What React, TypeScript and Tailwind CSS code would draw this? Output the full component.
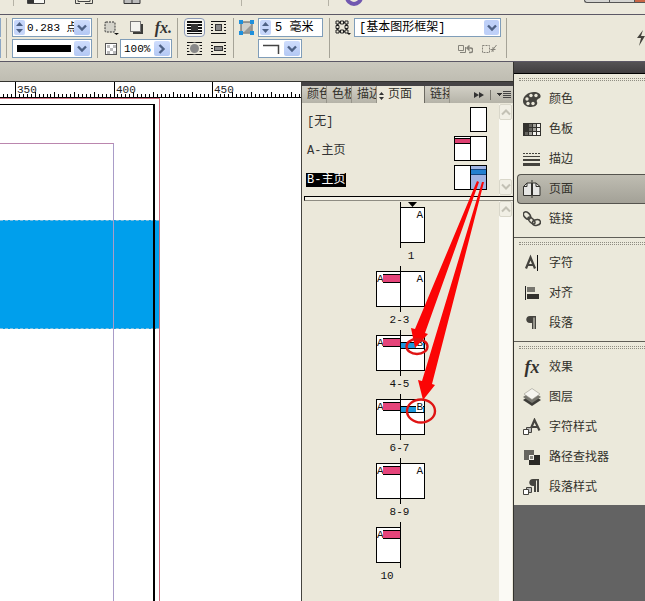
import { useState } from "react";
import type { ReactNode } from "react";

type SpreadData = {
  label: string;
  left?: string;
  right?: string;
};

const spreads: SpreadData[] = [
  { label: "1", right: "A" },
  { label: "2-3", left: "A", right: "A" },
  { label: "4-5", left: "A", right: "B" },
  { label: "6-7", left: "A", right: "B" },
  { label: "8-9", left: "A", right: "A" },
  { label: "10", left: "A" },
];

const Separator = () => <div className="w-px shrink-0 self-stretch bg-[#a5a397]" />;

const Chevron = ({ className = "" }: { className?: string }) => (
  <svg viewBox="0 0 10 8" className={"w-[10px] h-2 " + className}>
    <path d="M1 1.5 L5 5.5 L9 1.5" fill="none" stroke="#4d6185" strokeWidth="2.4" />
  </svg>
);

const DropButton = ({ label, turn = "" }: { label: string; turn?: string }) => (
  <button
    aria-label={label}
    className="w-4 shrink-0 flex items-center justify-center rounded-xs bg-linear-to-b from-[#cfddfc] to-[#b3c8f4]"
  >
    <Chevron className={turn} />
  </button>
);

const Stepper = ({ label }: { label: string }) => (
  <button
    aria-label={label}
    className="w-[11px] shrink-0 flex items-center justify-center rounded-xs bg-[#c6d6fa]"
  >
    <svg viewBox="0 0 9 13" className="w-[9px] h-[13px]">
      <path d="M1 5 L4.5 1 L8 5 Z M1 8 L4.5 12 L8 8 Z" fill="#4d6185" />
    </svg>
  </button>
);

const Field = ({ children, className = "" }: { children: ReactNode; className?: string }) => (
  <div className={"flex h-[19px] p-px bg-white border border-[#7f9db9] " + className}>
    {children}
  </div>
);

const WrapIcon = ({ kind }: { kind: "none" | "box" | "shape" | "jump" }) => (
  <svg viewBox="0 0 15 13" className="w-[15px] h-[13px]" shapeRendering="crispEdges">
    <path
      d="M0 .5H15M0 3.5H15M0 6.5H15M0 9.5H15M0 12.5H15"
      stroke="#111"
      strokeWidth={kind === "none" ? 2 : 1}
    />
    {kind === "none" && <rect x="4" y="3" width="7" height="7" fill="#333" />}
    {kind === "box" && (
      <>
        <rect x="2" y="2" width="11" height="9" fill="#ebe8da" />
        <rect x="4.5" y="3.5" width="6" height="6" fill="#888" stroke="#333" />
      </>
    )}
    {kind === "shape" && (
      <g shapeRendering="auto">
        <circle cx="7.5" cy="6.5" r="6" fill="#ebe8da" />
        <circle cx="7.5" cy="6.5" r="4.5" fill="#888" />
      </g>
    )}
    {kind === "jump" && (
      <>
        <rect x="2" y="2" width="11" height="9" fill="#ebe8da" />
        <rect x="3.5" y="4.5" width="8" height="4" fill="#888" stroke="#333" />
      </>
    )}
  </svg>
);

const TopStrip = () => (
  <div className="flex items-start h-[15px] pl-[13px] bg-[#ece9dc] border-b border-[#5c5866] overflow-hidden">
    <div className="w-px h-1.5 bg-[#b5b2a6]" />
    <svg viewBox="0 0 114 4" className="ml-[13px] w-[114px] h-1">
      <path d="M.5 0V3.5H17.5V0" fill="#f8f8f4" stroke="#444" />
      <rect x="1" width="6" height="3" fill="#333" />
      <path d="M48.5 0V3.5H53M58 3.5H65.5V0M51 0V1.5H63V0" fill="none" stroke="#444" />
      <path d="M97 0V3.5H113V0M105 0V3" fill="#bbb" stroke="#333" />
    </svg>
    <div className="ml-[100px] w-px h-1.5 bg-[#b5b2a6]" />
    <div className="ml-[86px] w-px h-1.5 bg-[#b5b2a6]" />
    <svg viewBox="0 0 18 7" className="ml-4 w-[18px] h-[7px]">
      <circle cx="9" cy="-3" r="7" fill="none" stroke="#7158b0" strokeWidth="4" />
    </svg>
    <div className="ml-auto flex h-[3px] w-[61px] border-l border-b border-[#555] rounded-bl bg-[#d5d5d2]">
      <div className="w-[25px] border-r border-[#555]" />
      <div className="w-[25px] border-r border-[#555]" />
      <div className="flex-1 bg-[#c96545]" />
    </div>
  </div>
);

const ControlBar = () => {
  const [weight, setWeight] = useState("0.283 点");
  const [opacity, setOpacity] = useState("100%");
  const [corner, setCorner] = useState("5 毫米");

  return (
    <div className="flex gap-[5px] py-[3px] bg-[#ebe8da] border-b border-[#5c5866] overflow-hidden">
      <div className="w-px flex flex-col gap-0.5 shrink-0">
        <div className="h-[19px] bg-[#8ba6c4]" />
        <div className="h-[19px] bg-[#8ba6c4]" />
      </div>
      <Separator />

      <div className="flex flex-col gap-0.5 w-[80px] shrink-0">
        <Field>
          <Stepper label="粗细" />
          <input
            aria-label="描边粗细"
            value={weight}
            onChange={(e) => setWeight(e.target.value)}
            className="min-w-0 flex-1 pl-0.5 text-[11px] leading-4 outline-none"
          />
          <DropButton label="选择粗细" />
        </Field>
        <Field>
          <div className="flex-1 mx-[3px] my-1 bg-black" />
          <DropButton label="描边类型" />
        </Field>
      </div>
      <Separator />

      <div className="flex flex-col gap-0.5 w-[69px] shrink-0">
        <div className="flex items-center justify-between h-[19px]">
          <svg viewBox="0 0 16 15" className="w-4 h-[15px]">
            <rect x="2" y="2" width="10" height="10" rx="1" fill="#d4d3ca" stroke="#333" strokeDasharray="2 1" />
            <path d="M11 13h5l-2.5 2z" fill="#111" />
          </svg>
          <svg viewBox="0 0 15 15" className="w-[15px] h-[15px]">
            <rect x="4" y="4" width="10" height="10" fill="#3d3d3a" />
            <rect x="1.5" y="1.5" width="10" height="10" fill="#f3f3ef" stroke="#777" />
          </svg>
          <button
            aria-label="添加效果"
            className="font-['Liberation_Serif',serif] italic font-bold text-base leading-4 text-[#333]"
          >
            fx.
          </button>
        </div>
        <div className="flex items-center justify-between h-[19px] pl-0.5">
          <svg viewBox="0 0 12 12" className="w-3 h-3">
            <rect x=".5" y=".5" width="11" height="11" fill="#fff" stroke="#555" />
            <path d="M2 2h3v3H2zM8 2h3v3H8zM5 5h3v3H5zM2 8h3v3H2zM8 8h3v3H8z" fill="#bbb" />
          </svg>
          <Field className="w-[52px]">
            <input
              aria-label="不透明度"
              value={opacity}
              onChange={(e) => setOpacity(e.target.value)}
              className="min-w-0 flex-1 pl-0.5 text-[11px] leading-4 outline-none"
            />
            <DropButton label="调整不透明度" turn="-rotate-90" />
          </Field>
        </div>
      </div>
      <Separator />

      <div className="grid grid-cols-2 gap-y-0.5 w-[45px] shrink-0 place-items-center">
        <button
          aria-label="无文本绕排"
          className="flex items-center justify-center w-[21px] h-[19px] rounded border border-[#8d9bb8] bg-[#f6f5f0]"
        >
          <WrapIcon kind="none" />
        </button>
        <button aria-label="沿定界框绕排" className="h-[19px] pl-1 flex items-center">
          <WrapIcon kind="box" />
        </button>
        <button aria-label="沿对象形状绕排" className="h-[19px] flex items-center">
          <WrapIcon kind="shape" />
        </button>
        <button aria-label="上下型绕排" className="h-[19px] pl-1 flex items-center">
          <WrapIcon kind="jump" />
        </button>
      </div>
      <Separator />

      <div className="flex gap-1 w-[85px] shrink-0">
        <svg viewBox="0 0 15 15" className="mt-0.5 w-[15px] h-[15px] shrink-0">
          <rect x="2" y="2" width="11" height="11" fill="#cfcfca" stroke="#555" />
          <path d="M5 12 L12 5 V12 Z" fill="#9a9a96" />
          <path d="M0 0h4v4H0zM11 0h4v4h-4zM0 11h4v4H0zM11 11h4v4h-4z" fill="#1e90dc" />
        </svg>
        <div className="flex flex-col gap-0.5">
          <Field className="w-[65px]">
            <Stepper label="转角" />
            <input
              aria-label="转角大小"
              value={corner}
              onChange={(e) => setCorner(e.target.value)}
              className="min-w-0 flex-1 pl-1 text-xs leading-4 outline-none"
            />
          </Field>
          <Field className="w-[44px]">
            <svg viewBox="0 0 24 15" className="flex-1 h-[15px]">
              <path d="M3 4.5H18.5V13" fill="none" stroke="#444" strokeWidth="1.5" />
            </svg>
            <DropButton label="转角形状" />
          </Field>
        </div>
      </div>
      <Separator />

      <div className="flex gap-[3px] w-[166px] shrink-0">
        <svg viewBox="0 0 16 15" className="mt-0.5 w-4 h-[15px] shrink-0">
          <rect x="2.5" y="2.5" width="9" height="9" fill="none" stroke="#222" strokeWidth="1.5" />
          <path
            d="M1 1h3v3H1zM5.500 1h3v3h-3zM10 1h3v3h-3zM1 5.500h3v3H1zM10 5.500h3v3h-3zM1 10h3v3H1zM5.500 10h3v3h-3zM10 10h3v3h-3z"
            fill="#ebe8da"
            stroke="#222"
          />
          <path d="M12 13h4l-2 2z" fill="#111" />
        </svg>
        <div className="flex-1 flex flex-col gap-0.5">
          <div className="relative">
            <select
              aria-label="对象样式"
              className="block w-full h-[19px] pl-1 appearance-none bg-white border border-[#7f9db9] text-xs leading-4 outline-none"
            >
              <option>[基本图形框架]</option>
            </select>
            <span className="pointer-events-none absolute inset-y-0.5 right-0.5 w-[15px] flex items-center justify-center rounded-xs bg-[#bed0f8]">
              <Chevron />
            </span>
          </div>
          <div className="flex justify-end items-center gap-2 h-[19px] pr-1">
            <svg viewBox="0 0 16 10" className="w-4 h-[10px]" fill="none" stroke="#85837a">
              <path d="M1.500 1.500h5v5h-5zM3 8.500h5.500V3" />
              <path d="M10.500 4h3a2 2 0 0 1 0 4.500H12M12.500 1.500 L10 4 L12.500 6.500" strokeWidth="1.5" />
            </svg>
            <svg viewBox="0 0 16 10" className="w-4 h-[10px]" fill="none" stroke="#85837a">
              <rect x="1.500" y="1.500" width="7" height="7" strokeDasharray="2 1" />
              <path d="M9.500 5.500h5M12 3v5M10.500 7.500 L15.500 1" />
            </svg>
          </div>
        </div>
      </div>
      <Separator />
      <button aria-label="快速应用" className="ml-auto flex items-center overflow-hidden w-2.5">
        <svg viewBox="0 0 10 18" className="w-2.5 h-[18px] shrink-0">
          <path d="M8 1 L2 9 H6 L4 17 L10 7 H6 Z" fill="#44423c" />
        </svg>
      </button>
    </div>
  );
};

// 50 mm take up 98.5 px at the current zoom level
const Ruler = () => {
  const ticks = Array.from({ length: 78 }, (_, i) => i - 4);
  return (
    <div className="h-4 overflow-hidden bg-white border-b border-black">
      <svg className="block w-full h-4" shapeRendering="crispEdges">
        {ticks.map((i) => (
          <rect
            key={i}
            x={Math.round(15 + i * 3.94)}
            y={i % 25 === 0 ? 0 : i % 5 === 0 ? 10 : 12}
            width="1"
            height="16"
            fill="#000"
          />
        ))}
        {["350", "400", "450"].map((text, i) => (
          <text key={text} x={17 + Math.round(i * 98.5)} y="11" fontSize="11" fill="#222">
            {text}
          </text>
        ))}
      </svg>
    </div>
  );
};

const Canvas = () => (
  <div className="relative flex-1 overflow-hidden bg-white">
    <div className="absolute left-0 top-[122px] w-[159px] h-[109px] bg-[#009fec] border-y border-dashed border-[#7fbfe0]" />
    <div className="absolute left-0 top-0 bottom-0 w-40 border-t border-r border-[#cf6d7e]" />
    <div className="absolute left-0 top-1.5 bottom-0 w-[155px] border-t border-r-2 border-black" />
    <div className="absolute left-0 top-[45px] bottom-0 w-[114px] border-t border-r border-t-[#bb86ae] border-r-[#a99cc8]" />
  </div>
);

const Tab = ({ children }: { children: string }) => (
  <button className="w-[25px] pt-0.5 pl-[5px] overflow-hidden whitespace-nowrap text-left border-r border-[#96948a]">
    {children}
  </button>
);

const ScrollArrow = ({ down = false }: { down?: boolean }) => (
  <button
    aria-label={down ? "向下滚动" : "向上滚动"}
    className="flex items-center justify-center w-[13px] h-4 rounded-xs border border-[#d9d7ca] bg-[#f1efe5]"
  >
    <svg viewBox="0 0 10 8" className={down ? "w-2.5 h-2" : "w-2.5 h-2 rotate-180"}>
      <path d="M1 1.5 L5 5.5 L9 1.5" fill="none" stroke="#c3c1b5" strokeWidth="2" />
    </svg>
  </button>
);

const MasterRow = ({ name, selected = false, children }: {
  name: string;
  selected?: boolean;
  children: ReactNode;
}) => (
  <div className="flex items-center justify-between h-[29px] pl-1 pr-3">
    <span className={"mt-1 px-px text-xs leading-[14px] " + (selected ? "bg-black text-white" : "text-[#333]")}>
      {name}
    </span>
    <div className="flex h-[25px] -mt-px border border-black bg-white divide-x divide-black">{children}</div>
  </div>
);

const Spread = ({ label, left, right }: SpreadData) => (
  <div className="h-16">
    <div className="flex items-center h-[46px]">
      <div className="w-6">
        {left && (
          <div className="flex h-9 pt-0.5 border border-r-0 border-black bg-white">
            <span className="w-1.5 text-[11px] leading-[11px]">{left}</span>
            <div className="flex-1 h-[9px] border-y border-black bg-[#e5447a]" />
          </div>
        )}
      </div>
      <div className="w-px h-full bg-black" />
      <div className="w-6">
        {right && (
          <div className="h-9 pt-0.5 border border-l-0 border-black bg-white">
            {right === "B" ? (
              <div className="flex justify-end h-[7px] mt-1 border-y border-black bg-[#1b97dc]">
                <span className="-mt-1 mr-px h-[9px] bg-white text-[11px] leading-[9px]">B</span>
              </div>
            ) : (
              <div className="pr-px text-right text-[11px] leading-[11px]">{right}</div>
            )}
          </div>
        )}
      </div>
    </div>
    <div className={"flex h-4 items-center text-[11px] leading-4 " + (left ? "" : "pl-6")}>
      <span className={"text-center " + (left && right ? "w-[47px]" : "w-[22px]")}>{label}</span>
    </div>
  </div>
);

// Red call-outs from master B to the pages it is applied to
const Callouts = () => (
  <svg
    viewBox="302 81 210 350"
    className="pointer-events-none absolute left-0 top-0 w-[210px] h-[350px]"
  >
    <path d="M477 180 L415 328 L411 327 L415 347 L428 333 L425 332 L479 181 Z" fill="#fb0505" />
    <path d="M482 181 L422 380 L418 379 L423 399 L435 384 L432 383 L484 181 Z" fill="#fb0505" />
    <ellipse cx="417" cy="345.5" rx="10.5" ry="7.5" fill="none" stroke="#df1414" strokeWidth="2.4" />
    <ellipse cx="421" cy="410" rx="14" ry="11.5" fill="none" stroke="#df1414" strokeWidth="2.4" />
  </svg>
);

const PagesPanel = () => (
  <div className="relative flex flex-col w-[212px] shrink-0 bg-[#ebe8da] border-l border-[#45443f]">
    <div className="h-1 bg-[#454345]" />
    <div className="flex h-[17px] text-xs leading-[15px] text-[#33322c] bg-linear-to-b from-[#d2d0c6] to-[#b5b3a8]">
      <Tab>颜色</Tab>
      <Tab>色板</Tab>
      <Tab>描边</Tab>
      <button className="flex items-center gap-1 w-[48px] pt-0.5 pl-0.5 whitespace-nowrap bg-[#ebe8da] border-r border-[#6c6a62]">
        <svg viewBox="0 0 5 8" className="w-[5px] h-2">
          <path d="M0 3 L2.500 0 L5 3 Z M0 5 L2.500 8 L5 5 Z" fill="#333" />
        </svg>
        页面
      </button>
      <Tab>链接</Tab>
      <div className="ml-auto flex items-center gap-1.5 pr-0.5">
        <button aria-label="折叠面板">
          <svg viewBox="0 0 10 6" className="w-2.5 h-1.5">
            <path d="M0 0 L5 3 L0 6 Z M5 0 L10 3 L5 6 Z" fill="#333" />
          </svg>
        </button>
        <div className="w-px h-2.5 bg-[#77756d]" />
        <button aria-label="面板菜单">
          <svg viewBox="0 0 14 8" className="w-3.5 h-2" shapeRendering="crispEdges">
            <path d="M0 2h5L2.500 5z" fill="#333" />
            <path d="M6 .5h8M6 2.500h8M6 4.500h8M6 6.500h8" stroke="#444" />
          </svg>
        </button>
      </div>
    </div>

    <div className="flex">
      <div className="flex-1 pt-0.5 pb-1">
        <MasterRow name="[无]">
          <div className="w-[15px]" />
        </MasterRow>
        <MasterRow name="A-主页">
          <div className="w-4 pt-px">
            <div className="h-1.5 border-y border-black bg-[#dd3f70]" />
          </div>
          <div className="w-[15px]" />
        </MasterRow>
        <MasterRow name="B-主页" selected>
          <div className="w-4" />
          <div className="w-[15px] pt-[3px] bg-[#9fb3e3]">
            <div className="h-1.5 border-y border-[#15457f] bg-[#2380d0]" />
          </div>
        </MasterRow>
      </div>
      <div className="flex flex-col justify-between w-[13px] my-px mr-px bg-[#fbfaf5]">
        <ScrollArrow />
        <ScrollArrow down />
      </div>
    </div>

    <div className="h-[5px] ml-0.5 border-t border-l border-black border-b border-b-[#8e8c82] bg-[#f4f2e8]" />

    <div className="flex flex-1">
      <div className="flex flex-1 flex-col items-center pt-px text-[#111]">
        <div className="h-0 w-[49px] pl-8">
          <svg viewBox="0 0 9 5" className="w-[9px] h-[5px]">
            <path d="M0 0 H9 L4.500 5 Z" fill="#000" />
          </svg>
        </div>
        {spreads.map((spread) => (
          <Spread key={spread.label} {...spread} />
        ))}
      </div>
      <div className="w-[13px] mr-px bg-[#fbfaf5]">
        <ScrollArrow />
      </div>
    </div>
    <Callouts />
  </div>
);

const iconClass = "w-[18px] h-[18px] shrink-0";

const icons: Record<string, ReactNode> = {
  颜色: (
    <svg viewBox="0 0 18 18" className={iconClass}>
      <path
        d="M11 2 C5 2 0 6 0 11 C0 15 4 17 8 17 C13 17 15 14 14 12 C13 10 15 9 17 8 C19 5 16 2 11 2 Z"
        fill="#45443f"
      />
      <g fill="#ebe8da">
        <circle cx="4" cy="9" r="1.700" />
        <circle cx="8" cy="5.500" r="1.700" />
        <circle cx="13" cy="5.500" r="1.700" />
        <circle cx="5" cy="13.500" r="1.700" />
        <circle cx="10" cy="13.500" r="1.700" />
      </g>
    </svg>
  ),
  色板: (
    <svg viewBox="0 0 18 18" className={iconClass} shapeRendering="crispEdges">
      <rect y="3" width="18" height="13" fill="#33322e" />
      <path d="M6 4h3v3H6zM6 8h3v3H6zM2 12h3v3H2z" fill="#66655f" />
      <path d="M10 4h3v3h-3zM10 8h3v3h-3zM6 12h3v3H6z" fill="#a3a29b" />
      <path d="M14 4h3v3h-3zM14 8h3v3h-3zM10 12h3v3h-3zM14 12h3v3h-3z" fill="#f4f3ee" />
    </svg>
  ),
  描边: (
    <svg viewBox="0 0 18 18" className={iconClass} shapeRendering="crispEdges">
      <path d="M0 3.500H17" stroke="#44433d" strokeDasharray="2 1" />
      <path d="M0 6h17v1H0zM0 9h17v2H0zM0 13h17v3H0z" fill="#44433d" />
    </svg>
  ),
  页面: (
    <svg viewBox="0 0 18 18" className={iconClass}>
      <path d="M8.500 3 H4 L.5 6.500 V15.500 H8.500 Z M9.500 3 H13 L17 6.500 V15.500 H9.500 Z" fill="#e6e6e4" stroke="#33322e" />
      <path d="M4 3V6.500H.5M13 3V6.500H17" fill="none" stroke="#33322e" />
      <path d="M9 0V18" stroke="#33322e" />
    </svg>
  ),
  链接: (
    <svg viewBox="0 0 18 18" className={iconClass} fill="none" stroke="#45443f" strokeWidth="1.500">
      <ellipse cx="4" cy="5.500" rx="2.800" ry="4.200" transform="rotate(-42 4 5.500)" />
      <ellipse cx="13.500" cy="12.500" rx="4" ry="2.800" transform="rotate(-12 13.500 12.500)" />
      <ellipse cx="8.500" cy="10.500" rx="2" ry="4.400" transform="rotate(-45 8.500 10.500)" />
    </svg>
  ),
  字符: (
    <svg viewBox="0 0 18 18" className={iconClass} fill="none" stroke="#45443f">
      <path d="M3 14.500 L7.500 3.500 L12 14.500 M4.500 11 H10.500" strokeWidth="2.200" />
      <path d="M14.500 1V17" stroke="#111" />
    </svg>
  ),
  对齐: (
    <svg viewBox="0 0 18 18" className={iconClass} shapeRendering="crispEdges">
      <path d="M2 2h1v14H2z" fill="#222" />
      <path d="M4 3h8v5H4z" fill="#77766f" />
      <path d="M4 10h12v5H4z" fill="#33322e" />
    </svg>
  ),
  段落: (
    <svg viewBox="0 0 18 18" className={iconClass}>
      <path d="M13 2 H7 C2 2 2 9 7 9 H9 V15 H10.500 V3.500 H11.500 V15 H13 Z" fill="#45443f" />
    </svg>
  ),
  效果: (
    <span className="w-[18px] font-['Liberation_Serif',serif] italic font-bold text-lg leading-[18px] text-[#33322e]">
      fx
    </span>
  ),
  图层: (
    <svg viewBox="0 0 18 18" className={iconClass}>
      <path d="M9 6 L18 12 L9 18 L0 12 Z" fill="#3d3c38" />
      <path d="M9 3 L18 9 L9 15 L0 9 Z" fill="#77766f" />
      <path d="M9 .5 L17 6 L9 11.500 L1 6 Z" fill="#f6f5f0" stroke="#99978d" strokeWidth=".6" />
    </svg>
  ),
  字符样式: (
    <svg viewBox="0 0 18 18" className={iconClass} fill="none" stroke="#45443f">
      <path d="M7 12.500 L11.500 2 L16.500 12.500 M8.500 9 H14.500" strokeWidth="2.200" />
      <path d="M3.500 9.500h5v5h-5z" fill="#bbb" />
      <path d="M.5 11.500h5v5h-5z" fill="#fff" />
    </svg>
  ),
  路径查找器: (
    <svg viewBox="0 0 18 18" className={iconClass} shapeRendering="crispEdges">
      <path d="M1 2h10v10H1z" fill="#66655f" />
      <path d="M6 7h11v10H6z" fill="#2a2926" />
      <path d="M6.500 7.500h4v4h-4z" fill="#8b8a83" stroke="#f1f0ea" />
    </svg>
  ),
  段落样式: (
    <svg viewBox="0 0 18 18" className={iconClass}>
      <path d="M16 1 H10 C5 1 5 8 10 8 H11 V14 H13 V2.500 H14 V14 H16 Z" fill="#45443f" />
      <path d="M3.500 9.500h5v5h-5z" fill="#bbb" stroke="#45443f" />
      <path d="M.5 11.500h5v5h-5z" fill="#fff" stroke="#45443f" />
    </svg>
  ),
};

const groups = [
  ["颜色", "色板", "描边", "页面", "链接"],
  ["字符", "对齐", "段落"],
  ["效果", "图层", "字符样式", "路径查找器", "段落样式"],
];

const Dock = () => {
  const [active, setActive] = useState("页面");

  return (
    <div className="flex flex-col w-[132px] shrink-0 bg-[#636363] border-l border-[#33322e]">
      <div className="h-3 bg-linear-to-b from-[#555355] to-[#403e40] border-b border-black" />
      {groups.map((group) => (
        <div key={group[0]} className="pl-[3px] pb-[3px] bg-[#ebe9db] border-b border-[#5f5e57] last:border-b-0">
          <div className="h-2.5 pt-1 pl-0.5">
            <div className="h-[3px] border-y border-dotted border-[#8f8d82]" />
          </div>
          {group.map((name) => (
            <button
              key={name}
              onClick={() => setActive(name)}
              className={
                "flex items-center gap-2 w-full h-[30px] pl-[5px] text-xs leading-4 text-[#33322c] border-y border-l rounded-l-sm " +
                (name === active
                  ? "border-[#55544e] bg-linear-to-b from-[#bfbdb2] to-[#a3a197]"
                  : "border-transparent")
              }
            >
              {icons[name]}
              <span className="pt-0.5">{name}</span>
            </button>
          ))}
        </div>
      ))}
    </div>
  );
};

export default function App() {
  return (
    <div className="min-h-screen flex flex-col overflow-hidden font-['Liberation_Mono','Noto_Sans_CJK_SC',monospace]">
      <TopStrip />
      <ControlBar />
      <div className="flex flex-1">
        <div className="flex flex-1 flex-col min-w-0">
          <div className="h-5 bg-linear-to-b from-[#cbc9be] to-[#bfbdb2] border-b border-[#33322e]" />
          <div className="flex flex-1">
            <div className="flex flex-1 flex-col min-w-0">
              <Ruler />
              <Canvas />
            </div>
            <PagesPanel />
          </div>
        </div>
        <Dock />
      </div>
    </div>
  );
}
